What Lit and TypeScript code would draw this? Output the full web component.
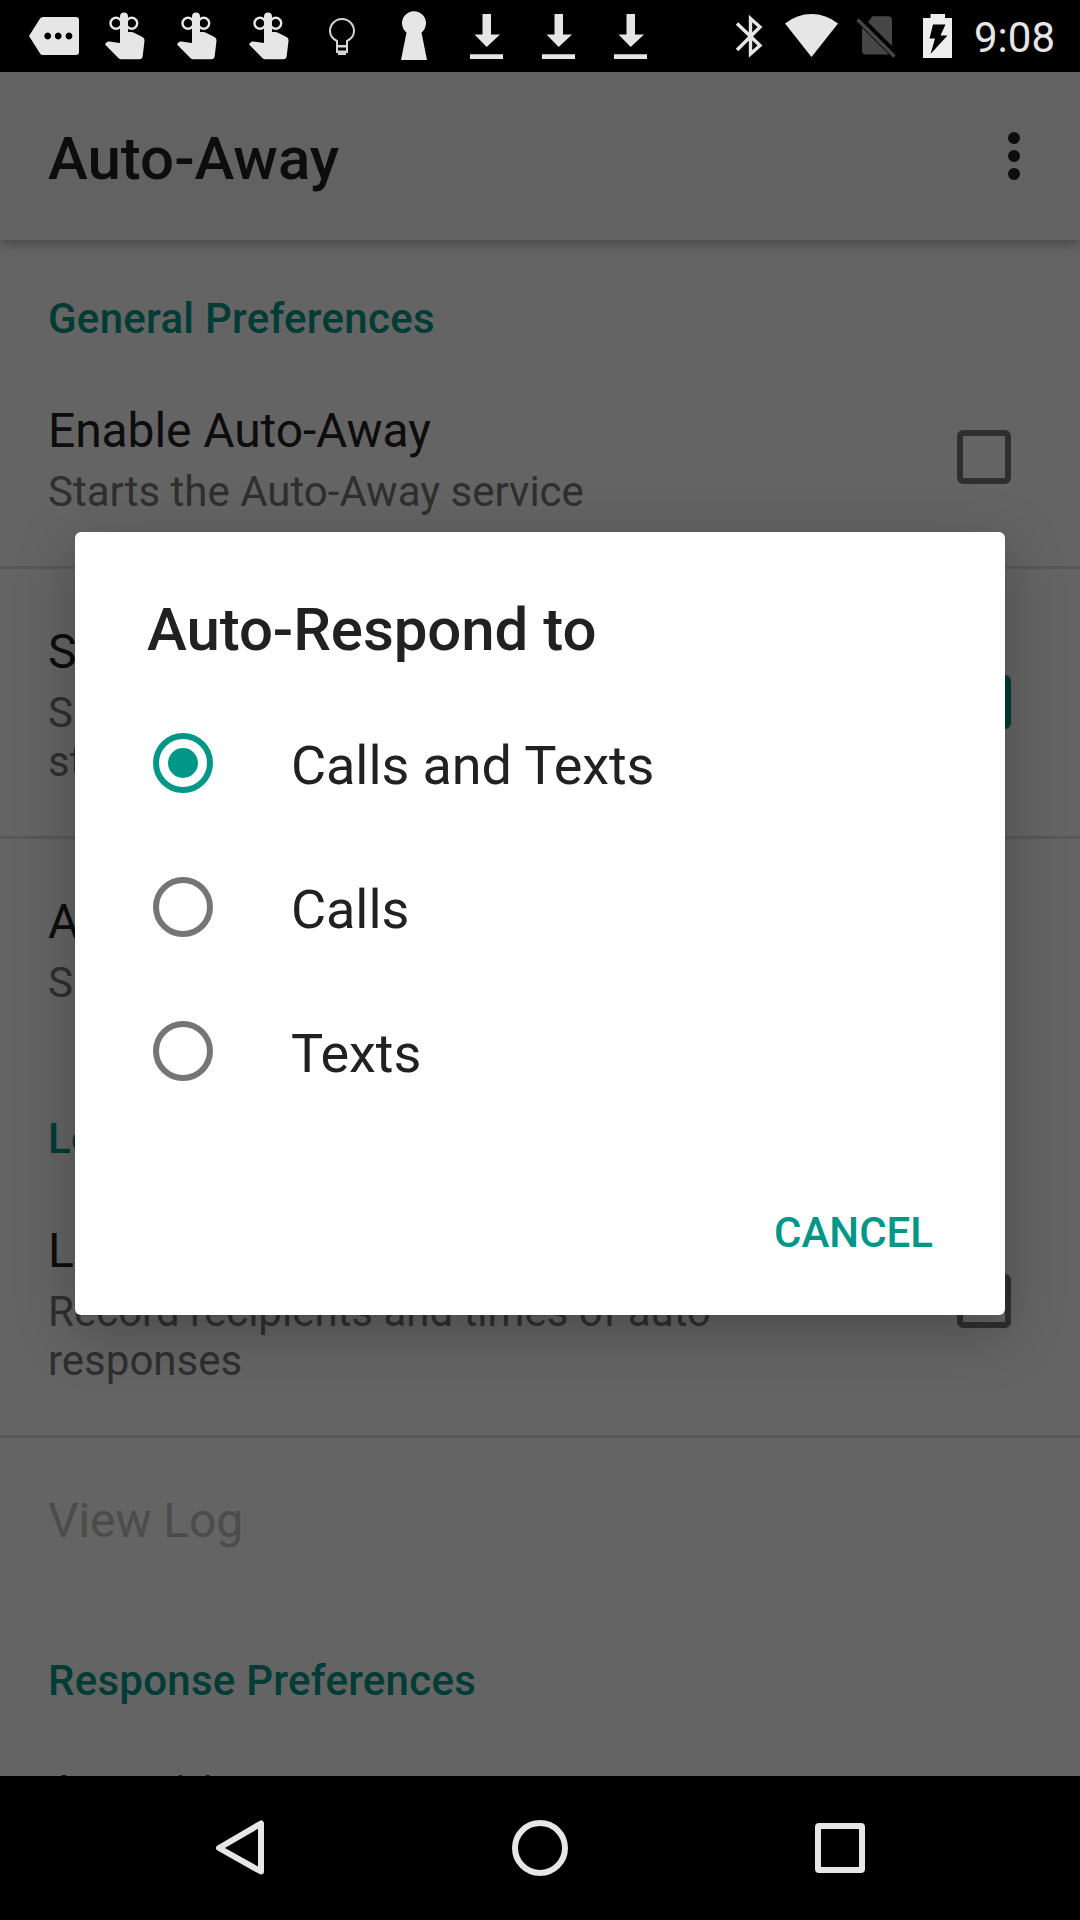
import { LitElement, html, svg, css, nothing } from "lit";
import { customElement, property, state } from "lit/decorators.js";

const FONT = css`
  :host {
    font-family: Roboto, "Noto Sans", sans-serif;
    box-sizing: border-box;
  }
  * {
    box-sizing: border-box;
  }
`;

const reminder = svg`
  <circle cx="116" cy="23.300" r="5.500" fill="none" stroke="#e6e6e6" stroke-width="2.400"/>
  <circle cx="131.700" cy="23.300" r="5.500" fill="none" stroke="#e6e6e6" stroke-width="2.400"/>
  <path d="M120 43V16.500a3.900 3.900 0 0 1 8 0V32h3.500q1 0 2 .5l9 4.600q2.300 1.200 2 3.700l-1.800 15.500q-.4 3-3.400 3h-18q-1.600 0-2.700-1.100L105 44.500l1-1.500q1.100-1.900 3.300-1.500z"/>`;

@customElement("status-bar")
class StatusBar extends LitElement {
  static styles = [
    FONT,
    css`
      :host {
        display: flex;
        height: 72px;
        background: #000;
        color: #e6e6e6;
        align-items: center;
        gap: 60px;
        padding-right: 25px;
      }
      .icons {
        display: block;
        flex: none;
        fill: #e6e6e6;
      }
      .right {
        display: flex;
        flex: 1;
        align-items: center;
        justify-content: space-between;
      }
      .clock {
        font-size: 42px;
        line-height: 72px;
        padding-top: 2px;
        height: 72px;
      }
    `,
  ];

  render() {
    const download = svg`<path d="M482.500 14h8.500v20.500h9L486.700 47 474.500 34.500h8zM470 54.300h33v4.700h-33z"/>`;
    return html`
      <svg class="icons" width="660" height="72" viewBox="0 0 660 72">
        <path fill-rule="evenodd" d="M43 17H76q3 0 3 3V52q0 3-3 3H43q-2 0-3-1.500L29 36 40 18.500Q41 17 43 17zM47.700 32.600a3.400 3.400 0 1 0 .01 0zM58.200 32.600a3.400 3.400 0 1 0 .01 0zM69 32.600a3.400 3.400 0 1 0 .01 0z"/>
        <g>${reminder}</g>
        <g transform="translate(72)">${reminder}</g>
        <g transform="translate(144)">${reminder}</g>
        <g fill="none" stroke="#d6d6d6" stroke-width="2">
          <path d="M337 46.500V41Q330 37.500 330 31a12 12 0 0 1 24 0Q354 37.500 347 41V46.500z"/>
          <path d="M337 46V52H347V46"/>
        </g>
        <path fill="#d6d6d6" d="M336 45h12v2h-12zM336 50.500h12v2.500h-2v2h-8v-2h-2z"/>
        <path d="M406.500 32.500a12 12 0 1 1 15 0L427 60H401z"/>
        ${download}
        <g transform="translate(72)">${download}</g>
        <g transform="translate(144)">${download}</g>
      </svg>
      <div class="right">
        <svg class="icons" width="240" height="72" viewBox="720 0 240 72">
          <path fill="none" stroke="#e6e6e6" stroke-width="3.400" d="M737 23.500 760 45.500 750.500 54V18.500L760 27 737 50"/>
          <path d="M785 23.500Q797 14 811.500 14T838 23.500L811.500 57z"/>
          <path fill="#464646" d="M872.500 16.300H888q4 0 4 4V46L868 22zM862 27.500 889 54.500H866q-4 0-4-4z"/>
          <path stroke="#464646" stroke-width="3.400" d="M857.500 19.500 894.500 56.500"/>
          <path fill-rule="evenodd" fill="#eee" d="M930.500 14h14.500v4h7v40h-29V18h7.500zM933 24.500 929.500 38.500H935L930.500 54 947.500 35.500H940.500L945.500 24.500z"/>
        </svg>
        <span class="clock">9:08</span>
      </div>
    `;
  }
}

@customElement("app-bar")
class AppBar extends LitElement {
  static styles = [
    FONT,
    css`
      :host {
        display: flex;
        flex: none;
        height: 168px;
        padding: 0 60px 0 48px;
        justify-content: space-between;
        align-items: center;
        background: #f5f5f5;
        color: #212121;
        box-shadow: 0 4px 12px rgba(0, 0, 0, 0.28);
        z-index: 1;
      }
      .title {
        font-size: 60px;
        font-weight: 500;
        line-height: 71px;
        padding-top: 5px;
      }
      .menu {
        display: flex;
        flex-direction: column;
        gap: 6px;
      }
      .dot {
        width: 12px;
        height: 12px;
        border-radius: 50%;
        background: #212121;
      }
    `,
  ];

  render() {
    return html`
      <div class="title">Auto-Away</div>
      <div class="menu"><i class="dot"></i><i class="dot"></i><i class="dot"></i></div>
    `;
  }
}

@customElement("pref-row")
class PrefRow extends LitElement {
  @property() heading = "";
  @property() summary = "";
  @property() check = "";
  @property({ type: Boolean, reflect: true }) off = false;
  @property({ type: Boolean, reflect: true }) last = false;

  static styles = [
    FONT,
    css`
      :host {
        display: flex;
        align-items: center;
        justify-content: space-between;
        padding: 54px 69px 50px 48px;
        border-bottom: 3px solid #dcdcdc;
        flex: none;
      }
      :host([last]) {
        border-bottom-color: transparent;
      }
      .text {
        width: 700px;
      }
      .heading {
        font-size: 48px;
        line-height: 57px;
        letter-spacing: -0.1px;
        color: #212121;
        white-space: nowrap;
      }
      :host([off]) .heading {
        color: #bdbdbd;
      }
      .summary {
        font-size: 42px;
        line-height: 49px;
        padding-top: 8px;
        color: #757575;
        white-space: pre-line;
      }
      .box {
        width: 54px;
        height: 54px;
        border: 6px solid #757575;
        border-radius: 6px;
        margin-top: -5px;
      }
      .on {
        background: #009688;
        border-color: #009688;
      }
    `,
  ];

  render() {
    return html`
      <div class="text">
        <div class="heading">${this.heading}</div>
        ${this.summary ? html`<div class="summary">${this.summary}</div>` : nothing}
      </div>
      ${this.check ? html`<div class="box ${this.check}"></div>` : nothing}
    `;
  }
}

@customElement("choice-dialog")
class ChoiceDialog extends LitElement {
  @state() private selected = 0;
  private options = ["Calls and Texts", "Calls", "Texts"];

  static styles = [
    FONT,
    css`
      :host {
        display: flex;
        flex-direction: column;
        width: 930px;
        height: 783px;
        background: #fff;
        border-radius: 6px;
        color: #212121;
        box-shadow: 0 16px 60px rgba(0, 0, 0, 0.26);
      }
      .title {
        font-size: 60px;
        font-weight: 500;
        line-height: 71px;
        letter-spacing: -0.08px;
        padding: 62px 72px 26px;
      }
      .option {
        display: flex;
        align-items: center;
        height: 144px;
        padding-left: 78px;
        gap: 78px;
        font-size: 54px;
        letter-spacing: -0.08px;
        cursor: pointer;
      }
      .radio {
        width: 60px;
        height: 60px;
        border: 6px solid #757575;
        border-radius: 50%;
        display: grid;
        place-items: center;
      }
      .label {
        line-height: 63px;
        padding-top: 5px;
      }
      .picked {
        border-color: #009688;
      }
      .picked::after {
        content: "";
        width: 30px;
        height: 30px;
        border-radius: 50%;
        background: #009688;
      }
      .actions {
        display: flex;
        justify-content: flex-end;
        padding: 85px 72px 0;
        font-size: 42px;
        font-weight: 500;
        line-height: 49px;
        color: #009688;
      }
    `,
  ];

  render() {
    return html`
      <div class="title">Auto-Respond to</div>
      ${this.options.map(
        (o, i) => html`<div class="option" @click=${() => (this.selected = i)}>
          <div class="radio ${i === this.selected ? "picked" : ""}"></div>
          <div class="label">${o}</div>
        </div>`
      )}
      <div class="actions"><span>CANCEL</span></div>
    `;
  }
}

@customElement("nav-bar")
class NavBar extends LitElement {
  static styles = css`
    :host {
      display: flex;
      height: 144px;
      justify-content: center;
      background: #000;
    }
    .icons {
      fill: none;
      stroke: #e6e6e6;
      stroke-width: 6;
      stroke-linejoin: round;
    }
  `;

  render() {
    return html`<svg class="icons" width="720" height="144" viewBox="180 0 720 144">
      <path d="M261 47.500V95.500L219 72z"/>
      <circle cx="540" cy="72" r="25"/>
      <rect x="818" y="50" width="44" height="44" rx="1"/>
    </svg>`;
  }
}

@customElement("app-root")
class AppRoot extends LitElement {
  static styles = [
    FONT,
    css`
      :host {
        display: flex;
        flex-direction: column;
        width: 1080px;
        height: 1920px;
        overflow: hidden;
      }
      .screen {
        position: relative;
        height: 1704px;
        display: flex;
        flex-direction: column;
        overflow: hidden;
        background: #fafafa;
      }
      .list {
        display: flex;
        flex-direction: column;
      }
      .category {
        height: 108px;
        flex: none;
        padding: 54px 48px 0;
        font-size: 42px;
        font-weight: 500;
        line-height: 49px;
        letter-spacing: 0.26px;
        color: #009688;
      }
      .scrim {
        position: absolute;
        inset: 0;
        z-index: 2;
        background: rgba(0, 0, 0, 0.6);
        display: flex;
        justify-content: center;
        align-items: flex-start;
        padding-top: 460px;
      }
    `,
  ];

  render() {
    return html`
      <status-bar></status-bar>
      <div class="screen">
        <app-bar></app-bar>
        <div class="list">
          <div class="category">General Preferences</div>
          <pref-row heading="Enable Auto-Away" summary="Starts the Auto-Away service" check="empty"></pref-row>
          <pref-row heading="S" .summary=${"S\nst"} check="on"></pref-row>
          <pref-row heading="A" summary="S" last></pref-row>
          <div class="category">Lo</div>
          <pref-row heading="L" .summary=${"Record recipients and times of auto\nresponses"} check="empty"></pref-row>
          <pref-row heading="View Log" off last></pref-row>
          <div class="category">Response Preferences</div>
          <pref-row heading="Away iti"></pref-row>
        </div>
        <div class="scrim"><choice-dialog></choice-dialog></div>
      </div>
      <nav-bar></nav-bar>
    `;
  }
}
